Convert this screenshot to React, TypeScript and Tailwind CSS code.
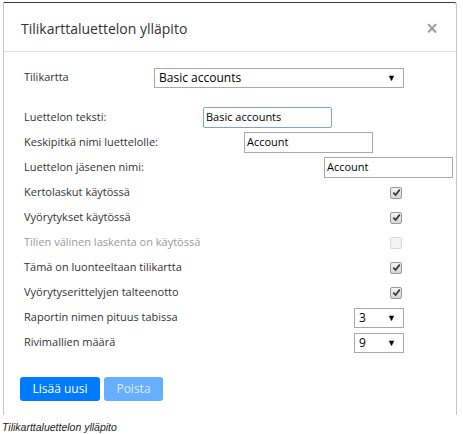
import React from 'react';

const font = { fontFamily: '"Open Sans", "Liberation Sans", sans-serif' };

function Check({ checked, disabled }: { checked?: boolean; disabled?: boolean }) {
  return (
    <span
      className={`flex h-[12px] w-[12px] items-center justify-center rounded-[2px] border ${
        disabled
          ? 'border-[#d8d8d8] bg-[#f4f4f4]'
          : 'border-[#9a9a9a] bg-gradient-to-b from-[#f2f2f2] to-[#d6d6d6]'
      }`}
    >
      {checked && (
        <svg viewBox="0 0 10 10" className="h-[9px] w-[9px]">
          <path d="M1.5 5.2 L4 7.8 L8.6 1.8" fill="none" stroke="#333" strokeWidth="1.9" />
        </svg>
      )}
    </span>
  );
}

function Select({ value, width }: { value: string; width: string }) {
  return (
    <div
      className={`flex h-[20px] ${width} items-center justify-between border border-[#a9a9a9] bg-white pl-[4px] pr-[7px] text-[12px] text-black`}
    >
      <span>{value}</span>
      <span className="text-[9px]">▼</span>
    </div>
  );
}

function TextInput({ value, focused }: { value: string; focused?: boolean }) {
  return (
    <div
      className={`flex h-[21px] w-[129px] items-center border bg-white pl-[2px] text-[11px] text-black ${
        focused ? 'border-[#7da2d8] rounded-[2px]' : 'border-[#a9a9a9]'
      }`}
    >
      {value}
    </div>
  );
}

export default function App() {
  const checks = [
    { label: 'Kertolaskut käytössä', checked: true },
    { label: 'Vyörytykset käytössä', checked: true },
    { label: 'Tilien välinen laskenta on käytössä', checked: false, disabled: true },
    { label: 'Tämä on luonteeltaan tilikartta', checked: true },
    { label: 'Vyörytyserittelyjen talteenotto', checked: true },
  ];

  return (
    <div className="h-[434px] w-[463px] overflow-hidden bg-white pt-[2px]" style={font}>
      <div className="ml-[3px] flex h-[413px] w-[454px] flex-col rounded-tr-[3px] border-x border-t border-x-[#c8c8c8] border-t-[#3a3a3a] bg-white">
        <div className="flex h-[49px] items-center justify-between border-b border-[#e5e5e5] pl-[17px] pr-[18px] pt-[3px]">
          <h2 className="text-[14px] text-[#333]">Tilikarttaluettelon ylläpito</h2>
          <span className="text-[21px] font-semibold leading-none text-[#999]">×</span>
        </div>

        <div className="flex flex-col pl-[20px] pt-[13px] text-[11px] text-[#333]">
          <div className="flex h-[25px] items-center">
            <span className="w-[130px] shrink-0">Tilikartta</span>
            <Select value="Basic accounts" width="w-[250px]" />
          </div>

          <div className="mt-[15px] flex h-[25px] items-center">
            <span className="w-[179px] shrink-0">Luettelon teksti:</span>
            <TextInput value="Basic accounts" focused />
          </div>
          <div className="flex h-[25px] items-center">
            <span className="w-[220px] shrink-0">Keskipitkä nimi luettelolle:</span>
            <TextInput value="Account" />
          </div>
          <div className="flex h-[25px] items-center">
            <span className="w-[300px] shrink-0">Luettelon jäsenen nimi:</span>
            <TextInput value="Account" />
          </div>

          {checks.map((c) => (
            <div key={c.label} className="flex h-[25px] items-center">
              <span className={`w-[366px] shrink-0 ${c.disabled ? 'text-[#9a9a9a]' : ''}`}>{c.label}</span>
              <Check checked={c.checked} disabled={c.disabled} />
            </div>
          ))}

          <div className="flex h-[25px] items-center">
            <span className="w-[330px] shrink-0">Raportin nimen pituus tabissa</span>
            <Select value="3" width="w-[50px]" />
          </div>
          <div className="flex h-[25px] items-center">
            <span className="w-[330px] shrink-0">Rivimallien määrä</span>
            <Select value="9" width="w-[50px]" />
          </div>
        </div>

        <div className="mt-[22px] flex gap-[4px] pl-[16px]">
          <button className="h-[24px] w-[80px] rounded-[3px] bg-[#007bff] text-[12px] text-white">Lisää uusi</button>
          <button className="h-[24px] w-[59px] rounded-[3px] bg-[#66afff] text-[12px] text-[#dcecff]">Poista</button>
        </div>
      </div>
      <p
        className="mt-[5px] pl-[2px] text-[10.5px] italic text-[#222]"
        style={{ fontFamily: '"Liberation Sans", Arial, sans-serif' }}
      >
        Tilikarttaluettelon ylläpito
      </p>
    </div>
  );
}
